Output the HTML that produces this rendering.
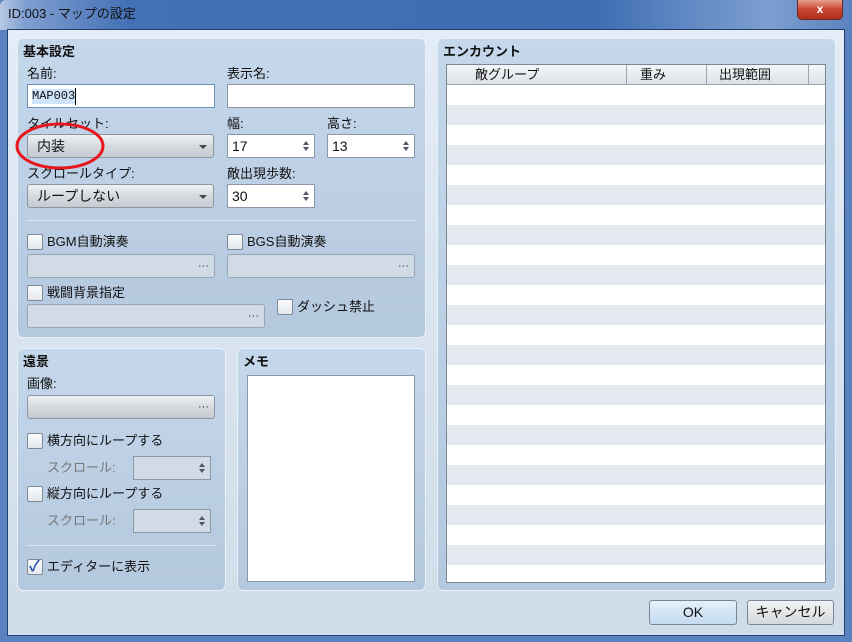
<!DOCTYPE html><html><head><meta charset="utf-8"><style>
*{box-sizing:border-box;margin:0;padding:0}
body{width:852px;height:642px;overflow:hidden;background:#5a82bf;font-family:"Liberation Sans","Noto Sans CJK JP",sans-serif;font-size:13px;line-height:16px;color:#111;position:relative}
.a{position:absolute}
#title{left:0;top:0;width:852px;height:30px;background:linear-gradient(90deg,#b7c9e3 0,#7f9fd1 3%,#4471b5 15%,#3e6db3 70%,#7d9fd0 90%,#5b82c0 100%);border-radius:6px 6px 0 0}
#title span{position:absolute;left:8px;top:6px;font-size:13px;color:#111}
#close{left:797px;top:0;width:46px;height:20px;background:linear-gradient(#e8a090,#c8452f 50%,#b0301c);border:1px solid #6a2a20;border-top:none;border-radius:0 0 5px 5px;color:#fff;font-weight:bold;text-align:center;font-size:12px;line-height:18px}
#client{left:7px;top:29px;width:838px;height:607px;background:linear-gradient(#e3ecf7,#d0dce9);border:1px solid #24406a}
.panel{background:linear-gradient(#c5d7eb,#b4c8de);border:1px solid #e8f0f8;border-radius:6px}
.h{font-weight:bold;font-size:13px}
.lbl{font-size:13px}
.inp{background:#fff;border:1px solid #8a98a8}
.sel{background:linear-gradient(#eef0f3,#d6dadf 50%,#c6cbd1);border:1px solid #8c969f;border-radius:3px;padding-left:9px;line-height:22px;font-size:14px}
.arr:after{content:"";position:absolute;right:6px;top:10px;border:4px solid transparent;border-top:4px solid #444}
.dis{background:#d0dbe6;border:1px solid #98a6b4;border-radius:3px}
.dots{position:absolute;right:5px;top:4px;font-size:11px;line-height:14px;color:#333}
.spin{background:#fff;border:1px solid #8a98a8;font-size:14px;padding-left:4px;line-height:22px}
.spin:before,.spin:after{content:"";position:absolute;right:5px;border:3.5px solid transparent}
.spin:before{top:3px;border-bottom:4px solid #556}
.spin:after{bottom:3px;border-top:4px solid #556}
.spin.d{background:#d0dbe6}
.cb{width:16px;height:16px;background:linear-gradient(#fafbfc,#e4e8ec);border:1px solid #7e8a96;border-radius:2px}
.sep{height:1px;background:#94a7bb;border-bottom:1px solid #dfe8f2}
.btn{border:1px solid #7a8796;border-radius:3px;text-align:center;line-height:22px;font-size:14px}
</style></head><body>
<div id="title" class="a"><span>ID:003 - マップの設定</span></div>
<div id="close" class="a">x</div>
<div id="client" class="a"></div>

<div class="a panel" style="left:17px;top:38px;width:409px;height:300px"></div>
<div class="a h" style="left:23px;top:44px">基本設定</div>
<div class="a lbl" style="left:27px;top:66px">名前:</div>
<div class="a lbl" style="left:227px;top:66px">表示名:</div>
<div class="a inp" style="left:27px;top:84px;width:188px;height:24px;border:1px solid #6d8fb8"><span style="position:absolute;left:4px;top:4px;font-family:'Liberation Mono',monospace;font-size:12px;line-height:15px;background:#cde4fb">MAP003</span><span style="position:absolute;left:47px;top:3px;width:1px;height:17px;background:#000"></span></div>
<div class="a inp" style="left:227px;top:84px;width:188px;height:24px"></div>
<div class="a lbl" style="left:27px;top:116px">タイルセット:</div>
<div class="a lbl" style="left:227px;top:116px">幅:</div>
<div class="a lbl" style="left:327px;top:116px">高さ:</div>
<div class="a sel arr" style="left:27px;top:134px;width:187px;height:24px">内装</div>
<div class="a spin" style="left:227px;top:134px;width:88px;height:24px">17</div>
<div class="a spin" style="left:327px;top:134px;width:88px;height:24px">13</div>
<div class="a lbl" style="left:27px;top:166px">スクロールタイプ:</div>
<div class="a lbl" style="left:227px;top:166px">敵出現歩数:</div>
<div class="a sel arr" style="left:27px;top:184px;width:187px;height:24px">ループしない</div>
<div class="a spin" style="left:227px;top:184px;width:88px;height:24px">30</div>
<div class="a sep" style="left:27px;top:220px;width:388px"></div>
<div class="a cb" style="left:27px;top:234px"></div><div class="a lbl" style="left:47px;top:234px">BGM自動演奏</div>
<div class="a cb" style="left:227px;top:234px"></div><div class="a lbl" style="left:247px;top:234px">BGS自動演奏</div>
<div class="a dis" style="left:27px;top:254px;width:188px;height:24px"><span class="dots">···</span></div>
<div class="a dis" style="left:227px;top:254px;width:188px;height:24px"><span class="dots">···</span></div>
<div class="a cb" style="left:27px;top:285px"></div><div class="a lbl" style="left:47px;top:285px">戦闘背景指定</div>
<div class="a dis" style="left:27px;top:304px;width:238px;height:24px"><span class="dots">···</span></div>
<div class="a cb" style="left:277px;top:299px"></div><div class="a lbl" style="left:297px;top:299px">ダッシュ禁止</div>

<svg class="a" style="left:14px;top:120px" width="94" height="52"><ellipse cx="46" cy="26" rx="43" ry="22" fill="none" stroke="#e8161c" stroke-width="3"/></svg>

<div class="a panel" style="left:17px;top:348px;width:209px;height:243px"></div>
<div class="a h" style="left:23px;top:354px">遠景</div>
<div class="a lbl" style="left:27px;top:376px">画像:</div>
<div class="a sel" style="left:27px;top:395px;width:188px;height:24px"><span class="dots" style="top:4px">···</span></div>
<div class="a cb" style="left:27px;top:433px"></div><div class="a lbl" style="left:47px;top:433px">横方向にループする</div>
<div class="a lbl" style="left:47px;top:460px;color:#777">スクロール:</div>
<div class="a spin d" style="left:133px;top:456px;width:78px;height:24px"></div>
<div class="a cb" style="left:27px;top:486px"></div><div class="a lbl" style="left:47px;top:486px">縦方向にループする</div>
<div class="a lbl" style="left:47px;top:513px;color:#777">スクロール:</div>
<div class="a spin d" style="left:133px;top:509px;width:78px;height:24px"></div>
<div class="a sep" style="left:27px;top:545px;width:189px"></div>
<div class="a cb" style="left:27px;top:559px"></div><div class="a" style="left:29px;top:559px;color:#2b56a8;font-size:15px;font-weight:bold">✓</div><div class="a lbl" style="left:47px;top:559px">エディターに表示</div>

<div class="a panel" style="left:237px;top:348px;width:189px;height:243px"></div>
<div class="a h" style="left:243px;top:354px">メモ</div>
<div class="a inp" style="left:247px;top:375px;width:168px;height:207px"></div>

<div class="a panel" style="left:437px;top:38px;width:399px;height:553px"></div>
<div class="a h" style="left:443px;top:44px">エンカウント</div>
<div class="a" style="left:446px;top:64px;width:380px;height:519px;background:#fff;border:1px solid #7a8696;overflow:hidden">
<div class="a" style="left:0;top:0;width:378px;height:20px;background:linear-gradient(#f4f6f8,#dde2e8);border-bottom:1px solid #99a4b0"></div>
<div class="a" style="left:179px;top:0;width:1px;height:20px;background:#99a4b0"></div>
<div class="a" style="left:259px;top:0;width:1px;height:20px;background:#99a4b0"></div>
<div class="a" style="left:361px;top:0;width:1px;height:20px;background:#99a4b0"></div>
<div class="a" style="left:28px;top:2px">敵グループ</div>
<div class="a" style="left:193px;top:2px">重み</div>
<div class="a" style="left:272px;top:2px">出現範囲</div>
<div class="a" style="left:0;top:20px;width:378px;height:500px;background:repeating-linear-gradient(#fff 0,#fff 20px,#e4eaf0 20px,#e4eaf0 40px)"></div>
</div>

<div class="a btn" style="left:649px;top:600px;width:88px;height:25px;background:linear-gradient(#e6f0fa,#c4dbf1)">OK</div>
<div class="a btn" style="left:747px;top:600px;width:87px;height:25px;background:linear-gradient(#f2f3f4,#d6d9dd)">キャンセル</div>
</body></html>
